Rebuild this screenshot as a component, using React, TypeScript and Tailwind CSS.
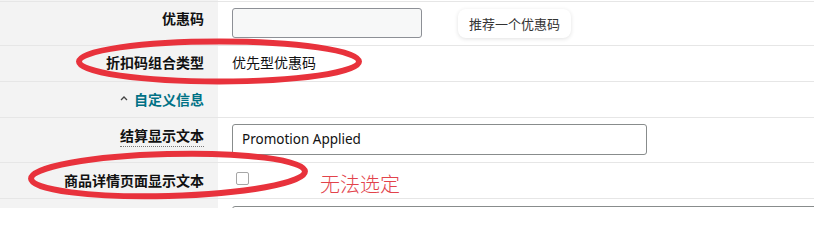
import React from "react";

const labelCls =
  "bg-[#f3f3f3] pr-[14px] text-right text-[14px] leading-[20px] font-bold text-[#111]";

export default function App() {
  return (
    <div
      className="relative w-[814px] h-[208px] overflow-hidden bg-white"
      style={{ fontFamily: '"Noto Sans CJK SC", "Noto Sans", sans-serif' }}
    >
      <div className="grid grid-cols-[218px_1fr]">
        {/* top strip */}
        <div className="h-[1px] bg-[#f3f3f3]" />
        <div className="h-[1px] bg-white" />

        {/* row 1 */}
        <div className={`${labelCls} h-[44px] border-t border-[#e6e6e6] pt-[6px]`}>优惠码</div>
        <div className="h-[44px] border-t border-[#e6e6e6] pl-[14px] pt-[6px] flex items-start">
          <div className="w-[190px] h-[30px] rounded-[3px] border border-[#8d9096] bg-[#f7f8f8]" />
          <div className="ml-[36px] mt-[1px] h-[29px] px-[11px] rounded-[8px] bg-white shadow-[0_1px_4px_rgba(0,0,0,0.12)] flex items-center text-[13px] text-[#333]">
            推荐一个优惠码
          </div>
        </div>

        {/* row 2 */}
        <div className={`${labelCls} h-[36px] border-t border-[#e6e6e6] pt-[6px]`}>折扣码组合类型</div>
        <div className="h-[36px] border-t border-[#e6e6e6] pl-[14px] pt-[6px] text-[14px] leading-[20px] text-[#111]">
          优先型优惠码
        </div>

        {/* row 3 */}
        <div className={`${labelCls} h-[36px] border-t border-[#e6e6e6] pt-[7px] flex justify-end items-start`}>
          <span className="flex items-center gap-[6px] text-[#007185]">
            <svg width="8" height="6" viewBox="0 0 8 6" className="mt-[-2px]">
              <path d="M1 5 L4 2 L7 5" fill="none" stroke="#444" strokeWidth="1.3" />
            </svg>
            自定义信息
          </span>
        </div>
        <div className="h-[36px] border-t border-[#e6e6e6]" />

        {/* row 4 */}
        <div className={`${labelCls} h-[45px] border-t border-[#e6e6e6] pt-[7px]`}>
          <span className="border-b border-dotted border-[#777] pb-[1px]">结算显示文本</span>
        </div>
        <div className="h-[45px] border-t border-[#e6e6e6] pl-[14px] pt-[6px]">
          <div
            className="w-[415px] h-[31px] rounded-[3px] border border-[#888c8c] bg-white flex items-center pl-[9px] text-[13.5px] text-[#111]"
            style={{ fontFamily: '"Noto Sans", sans-serif' }}
          >
            Promotion Applied
          </div>
        </div>

        {/* row 5 */}
        <div className={`${labelCls} h-[36px] border-t border-[#e6e6e6] pt-[7px]`}>商品详情页面显示文本</div>
        <div className="h-[36px] border-t border-[#e6e6e6] pl-[18px] flex items-start">
          <div className="mt-[9px] w-[13px] h-[13px] rounded-[2px] border border-[#a6a6a6] bg-white" />
          <div className="ml-[71px] mt-[8px] text-[20px] leading-[26px] text-[#e2434b] font-light">
            无法选定
          </div>
        </div>

        {/* row 6 */}
        <div className="h-[20px] border-t border-[#e6e6e6] bg-[#f3f3f3]" />
        <div className="h-[20px] border-t border-[#e6e6e6] pl-[14px] pt-[7px] overflow-hidden">
          <div className="w-[800px] h-[30px] rounded-[3px] border border-[#888c8c] bg-white" />
        </div>
      </div>

      {/* annotation ellipses */}
      <svg className="absolute left-0 top-0 pointer-events-none" width="814" height="208">
        <ellipse cx="219" cy="61.5" rx="140" ry="20" fill="none" stroke="#e8323c" strokeWidth="6" />
        <ellipse
          cx="168"
          cy="175"
          rx="137"
          ry="21"
          fill="none"
          stroke="#e8323c"
          strokeWidth="6"
          transform="rotate(-1.5 168 175)"
        />
      </svg>
    </div>
  );
}
